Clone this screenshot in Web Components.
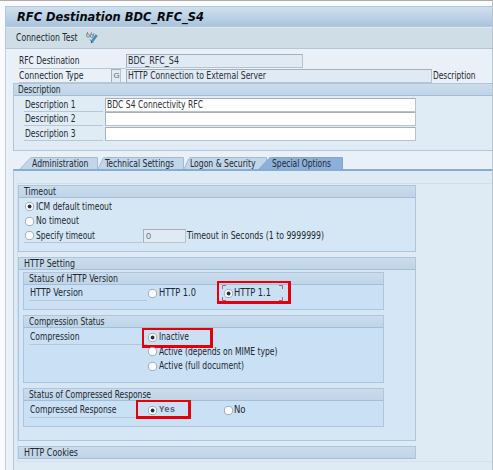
<!DOCTYPE html>
<html lang="en"><head><meta charset="utf-8"><title>RFC Destination</title>
<style>
body{margin:0;width:493px;height:470px;overflow:hidden;background:#fff;font:9.8px/14px "DejaVu Sans Condensed","DejaVu Sans","Noto Sans",sans-serif;color:#22282e}
</style></head><body>
<rfc-window></rfc-window>
<script>
function define(name, html, setup){
  const t=document.createElement('template'); t.innerHTML=html;
  customElements.define(name, class extends HTMLElement{
    connectedCallback(){
      if(this.shadowRoot) return;
      this.attachShadow({mode:'open'}).appendChild(t.content.cloneNode(true));
      if(setup) setup(this,this.shadowRoot);
    }
  });
}
/* Label condensed horizontally to the width in its w attribute */
define('fit-text','<style>:host{display:block;white-space:nowrap;flex:none}span{display:inline-block;transform-origin:0 50%}</style><span><slot></slot></span>',(el,r)=>{
  const s=r.querySelector('span'), w=+el.getAttribute('w');
  el.style.width=w+'px';
  s.style.transform=`scaleX(${w/s.getBoundingClientRect().width})`;
});
define('sap-row',`<style>:host{display:grid;box-sizing:border-box;align-items:center;position:relative;height:14px;grid-template-columns:var(--cols)}
:host([rule])::before{content:"";position:absolute;left:var(--rule-x,0);width:var(--rule-w,100px);bottom:0;height:1px;background:#b9c7d4}</style><slot></slot>`);
define('sap-field',`<style>:host{display:flex;align-items:center;box-sizing:border-box;height:14px;border:1px solid #b9c2ca;border-top-color:#a7b0b8;border-left-color:#a7b0b8;background:#dfeaf4;padding-left:1px;color:#2b3036}
:host([edit]){background:#fff}</style><slot></slot>`);
define('sap-radio',`<style>:host{display:flex;align-items:center;gap:1.5px;position:relative;height:14px}
svg{flex:none;width:9px;height:9px;overflow:visible}.dot{display:none}:host([checked]) .dot{display:block}</style>
<svg viewBox="0 0 9 9"><circle cx="4.5" cy="4.5" r="4.1" fill="#fbfdff" stroke="#94a3b3" stroke-width=".9"/><circle class="dot" cx="4.6" cy="4.5" r="1.9" fill="#252c4a"/></svg><slot></slot>`);
define('sap-group',`<style>:host{display:block;box-sizing:border-box;border:1px solid #adc5de;background:var(--body,#d5e6f5)}
header{box-sizing:border-box;height:12px;display:flex;align-items:center;padding-left:var(--pad,5px);background:linear-gradient(#cbdcec,#bed5e8);border-bottom:1px solid #a5bdd7}</style>
<header><slot name="head"></slot></header><slot></slot>`);
define('sap-tab',`<style>:host{display:block;position:relative;height:12px;margin-left:var(--overlap,0)}
svg{position:absolute;inset:0;overflow:visible}div{position:relative;padding-left:var(--pad,12px);line-height:13px}</style><svg><path/></svg><div><slot></slot></div>`,(el,r)=>{
  const w=+el.getAttribute('w'), on=el.hasAttribute('active'), k=+el.getAttribute('slant'), p=r.querySelector('path');
  el.style.width=w+'px'; r.querySelector('svg').setAttribute('width',w);
  p.setAttribute('d',`M0 12L${k-1} 1.4Q${k} .5 ${k+1.5} .5H${w-.5}V12`);
  p.setAttribute('fill',on?'#8db0da':'#c1d6e9'); p.setAttribute('stroke',on?'#82a6ce':'#a3bcd5');
});
define('sap-mark','<style>:host{position:absolute;box-sizing:border-box;border:solid #e6000c;border-width:2px 3px 3px 2px;left:var(--x);top:var(--y);width:var(--w);height:var(--h)}</style>');
define('sap-focus',`<style>:host{position:absolute;left:-2px;top:-1px;width:61px;height:16px}svg{display:block;width:61px;height:16px}</style><svg viewBox="0 0 61 16" fill="none" stroke="#b9606c"><path d="M.5 4V.5H4M.5 12v3.500H4M57 .5h3.500V4M57 15.500h3.500V12"/></svg>`);
define('tool-icon',`<style>:host{display:block;width:12px;height:13px}svg{display:block;width:12px;height:13px;overflow:visible}</style>
<svg viewBox="0 0 12 13" fill="none"><g stroke="#66727d" stroke-width=".8"><circle cx="2" cy="4.600" r="1.500"/><circle cx="5.700" cy="5" r="1.500"/><path d="M.7 3.500L1.700 1M4.600 3.600L5.700 1.200M7.200 4.600L8 2.200"/></g><path d="M4 8.500l2 2.300" stroke="#61717e"/><path d="M10.700 4L6.200 10.200" stroke="#3d8fbd" stroke-width="2.600"/><path d="M7.500 11.200L4.800 12.200l.3-2.700z" fill="#316784"/></svg>`);

define('rfc-window',`<style>
:host{display:block;box-sizing:border-box;width:493px;height:470px;overflow:hidden;border-top:1px solid #aeaeb0;padding:5px 0 0 5px;background:#fafbfd;position:relative}
:host::after{content:"";position:absolute;right:0;top:0;width:1px;height:470px;background:#b9c3cc}
.title{box-sizing:border-box;height:21px;border:1px solid #b2c7da;border-right:0;background:linear-gradient(#d0e0ee,#aac4dd);display:flex;align-items:center;padding-left:11px;font-size:13px;font-weight:700;font-style:italic;color:#080a0d}
.bar{box-sizing:border-box;height:22px;background:#cfdde7;border:1px solid #b5c6d7;border-top-color:#dbe6ef;border-right:0;display:flex;align-items:center;padding:0 0 1px 10px;gap:8px}
.main{height:421px;box-sizing:border-box;background:#e9f0f7;border-left:1px solid #c0d0e0;padding:5px 0 0 7px}
.info{padding-left:6px}.info sap-row{--cols:91.500px 15.500px 306px auto;--rule-w:107px;height:14.500px}
.g{width:10px;padding-left:2px;font:8px/12px "Liberation Sans",sans-serif;color:#5d6870}
.desc{height:68px;margin-top:0;--body:#dfebf5;--pad:4px;border-right:0}
.desc .rows{padding:1.500px 0 0 11px;display:grid;row-gap:.5px}.desc sap-row{--cols:79.500px 311px;--rule-w:79px;--rule-x:-1px}
.tabs{display:flex;margin:6px 0 0 7px;height:12px}
.page{border-top:2px solid #88abd4;border-left:1px solid #b1c7de;background:#dfebf4;height:301px;box-sizing:border-box}
.inner{margin:12px 0 0 3px;border-top:1px solid #cfdeeb;border-left:1px solid #cfdeeb;border-bottom:1px solid #d3e0ee;height:279px;box-sizing:border-box;padding:1px 0 0 0;display:flex;flex-direction:column;gap:5px}
.inner>sap-group{width:398px;flex:none}
.time{height:67px}.time .rows{padding:1.500px 0 0 6px;display:grid;row-gap:.6px}.time sap-row{--cols:118px 43px auto;--rule-w:118px;--rule-x:-1px}
.http{height:184px}.http .rows{padding:2px 0 0 4px;display:flex;flex-direction:column;gap:5px}
.http sap-group{width:361px;--body:#cae0f5;--pad:5px}
.sub{padding:1px 0 0 6px}.sub sap-row{--cols:118px 75.500px auto;--rule-w:118px;--rule-x:-1px;height:14.500px}
.mono{font:700 9px/12px "Liberation Mono",monospace;color:#5b6065}
</style>
<div class="title"><fit-text w="187">RFC Destination BDC_RFC_S4</fit-text></div>
<div class="bar"><fit-text w="61.500">Connection Test</fit-text><tool-icon></tool-icon></div>
<div class="main">
 <div class="info">
  <sap-row rule><fit-text w="60.500">RFC Destination</fit-text><span></span><sap-field style="width:177px"><fit-text w="51">BDC_RFC_S4</fit-text></sap-field></sap-row>
  <sap-row rule><fit-text w="64.500">Connection Type</fit-text><sap-field class="g">G</sap-field><sap-field><fit-text w="138">HTTP Connection to External Server</fit-text></sap-field><fit-text w="42.500" style="margin-left:1px">Description</fit-text></sap-row>
 </div>
 <sap-group class="desc"><fit-text slot="head" w="42.500">Description</fit-text>
  <div class="rows">
   <sap-row rule><fit-text w="50.500">Description 1</fit-text><sap-field edit><fit-text w="96">BDC S4 Connectivity RFC</fit-text></sap-field></sap-row>
   <sap-row rule><fit-text w="50.500">Description 2</fit-text><sap-field edit></sap-field></sap-row>
   <sap-row rule><fit-text w="50.500">Description 3</fit-text><sap-field edit></sap-field></sap-row>
  </div></sap-group>
 <div class="tabs">
  <sap-tab w="78" slant="11"><fit-text w="56.500">Administration</fit-text></sap-tab>
  <sap-tab w="86" slant="6" style="--pad:6.500px"><fit-text w="69">Technical Settings</fit-text></sap-tab>
  <sap-tab w="83" slant="6" style="--pad:6px"><fit-text w="65.500">Logon &amp; Security</fit-text></sap-tab>
  <sap-tab w="84" slant="11" active style="--overlap:-8px;--pad:13px"><fit-text w="59">Special Options</fit-text></sap-tab>
 </div>
 <div class="page"><div class="inner">
  <sap-group class="time"><fit-text slot="head" w="32">Timeout</fit-text>
   <div class="rows">
    <sap-row><sap-radio checked><fit-text w="76">ICM default timeout</fit-text></sap-radio></sap-row>
    <sap-row><sap-radio><fit-text w="43">No timeout</fit-text></sap-radio></sap-row>
    <sap-row rule><sap-radio><fit-text w="59">Specify timeout</fit-text></sap-radio><sap-field style="color:#69747d;font-family:'Liberation Sans';font-size:9px;padding-left:2px">0</sap-field><fit-text w="137" style="margin-left:1px">Timeout in Seconds (1 to 9999999)</fit-text></sap-row>
   </div></sap-group>
  <sap-group class="http"><fit-text slot="head" w="51">HTTP Setting</fit-text>
   <div class="rows">
    <sap-group style="height:38px"><fit-text slot="head" w="89">Status of HTTP Version</fit-text><div class="sub">
     <sap-row rule><fit-text w="53">HTTP Version</fit-text><sap-radio><fit-text w="37">HTTP 1.0</fit-text></sap-radio><sap-radio checked><fit-text w="37">HTTP 1.1</fit-text><sap-focus></sap-focus><sap-mark style="--x:-6.500px;--y:-5px;--w:74px;--h:23px"></sap-mark></sap-radio></sap-row></div></sap-group>
    <sap-group style="height:68px"><fit-text slot="head" w="75.500">Compression Status</fit-text><div class="sub" style="padding-top:2px">
     <sap-row rule><fit-text w="49.500">Compression</fit-text><sap-radio checked><fit-text w="30">Inactive</fit-text><sap-mark style="--x:-6px;--y:-2px;--w:71px;--h:20px"></sap-mark></sap-radio></sap-row>
     <sap-row><span></span><sap-radio><fit-text w="118.500">Active (depends on MIME type)</fit-text></sap-radio></sap-row>
     <sap-row><span></span><sap-radio><fit-text w="85">Active (full document)</fit-text></sap-radio></sap-row></div></sap-group>
    <sap-group style="height:39px"><fit-text slot="head" w="122">Status of Compressed Response</fit-text><div class="sub" style="padding-top:2px">
     <sap-row rule><fit-text w="86.500">Compressed Response</fit-text><sap-radio checked><fit-text class="mono" w="16">Yes</fit-text><sap-mark style="--x:-12px;--y:-3px;--w:55px;--h:19px"></sap-mark></sap-radio><sap-radio><fit-text w="11.500">No</fit-text></sap-radio></sap-row></div></sap-group>
   </div></sap-group>
  <sap-group style="height:13px"><fit-text slot="head" w="54">HTTP Cookies</fit-text></sap-group>
 </div></div>
</div>`);
</script></body></html>
